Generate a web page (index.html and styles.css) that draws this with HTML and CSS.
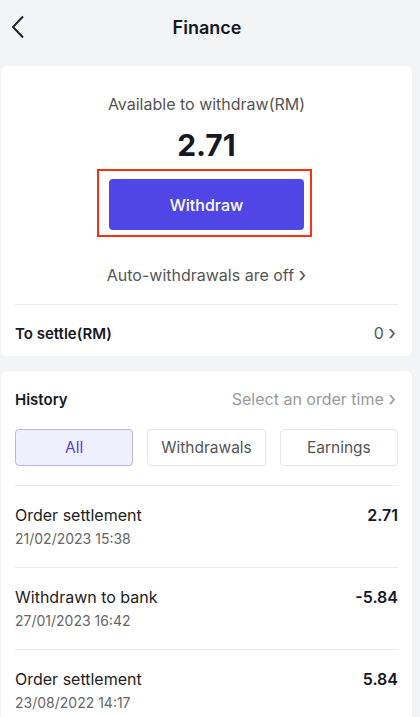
FILE: index.html
```html
<html>
    <head>
        <meta charset="utf-8" />
        <title>Finance</title>
        <link rel="stylesheet" href="styles.css">
    </head>
    <body>
        <div class="header">
            <svg class="back" width="14" height="24" viewBox="0 0 14 24">
                <path d="M12 1.5 L2 12 L12 22.5" fill="none" stroke="#222" stroke-width="2"/>
            </svg>
            <div class="title">Finance</div>
        </div>

        <div class="card balance">
            <div class="label">Available to withdraw(RM)</div>
            <div class="amount">2.71</div>
            <div class="highlight">
                <button class="withdraw">Withdraw</button>
            </div>
            <div class="auto">Auto-withdrawals are off <span class="chev">&#x203A;</span></div>
            <div class="settle">
                <span class="settle-label">To settle(RM)</span>
                <span class="settle-value">0 <span class="chev">&#x203A;</span></span>
            </div>
        </div>

        <div class="card history">
            <div class="history-head">
                <span class="history-title">History</span>
                <span class="history-filter">Select an order time <span class="chev">&#x203A;</span></span>
            </div>
            <div class="tabs">
                <div class="tab active">All</div>
                <div class="tab">Withdrawals</div>
                <div class="tab">Earnings</div>
            </div>
            <div class="row">
                <div>
                    <div class="row-name">Order settlement</div>
                    <div class="row-date">21/02/2023 15:38</div>
                </div>
                <div class="row-amount">2.71</div>
            </div>
            <div class="row">
                <div>
                    <div class="row-name">Withdrawn to bank</div>
                    <div class="row-date">27/01/2023 16:42</div>
                </div>
                <div class="row-amount">-5.84</div>
            </div>
            <div class="row">
                <div>
                    <div class="row-name">Order settlement</div>
                    <div class="row-date">23/08/2022 14:17</div>
                </div>
                <div class="row-amount">5.84</div>
            </div>
        </div>
    </body>
</html>
```

FILE: styles.css
```css
html, body {
    margin: 0;
    padding: 0;
    background: #f3f4f6;
    font-family: "Inter", "Liberation Sans", sans-serif;
    color: #222;
}

body {
    overflow: hidden;
    height: 717px;
}

.header {
    height: 55px;
    display: flex;
    align-items: center;
    justify-content: center;
    position: relative;
    margin-bottom: 11px;
}

.back {
    position: absolute;
    left: 11px;
    top: 15px;
}

.title {
    font-size: 18px;
    font-weight: 600;
    color: #161823;
    margin-right: 6px;
}

.card {
    background: #fff;
    margin: 0 8px 0 1px;
    border-radius: 6px;
}

.balance {
    padding: 26px 14px 0;
    text-align: center;
}

.label {
    font-size: 16px;
    color: #555;
    line-height: 24px;
}

.amount {
    font-size: 30px;
    font-weight: 700;
    color: #161823;
    line-height: 36px;
    margin-top: 11px;
}

.highlight {
    width: 195px;
    margin: 6px 0 0 82px;
    border: 2px solid #fa3010;
    padding: 8px 6px 5px 10px;
}

.withdraw {
    display: block;
    width: 100%;
    height: 51px;
    border: none;
    border-radius: 4px;
    background: #5046e5;
    color: #fff;
    font-family: inherit;
    font-size: 16px;
    font-weight: 500;
}

.auto {
    margin-top: 26px;
    font-size: 16px;
    color: #555;
    line-height: 24px;
}

.chev {
    font-size: 20px;
    line-height: 15px;
    position: relative;
    top: 1px;
}

.settle {
    margin-top: 17px;
    border-top: 1px solid #ebebeb;
    height: 52px;
    padding-top: 5px;
    box-sizing: border-box;
    display: flex;
    justify-content: space-between;
    align-items: center;
    font-size: 15px;
}

.settle-label {
    font-weight: 600;
    color: #161823;
}

.settle-value {
    color: #555;
    font-size: 16px;
    margin-right: 2px;
}

.history {
    margin-top: 15px;
    padding: 0 14px;
}

.history-head {
    height: 56px;
    display: flex;
    justify-content: space-between;
    align-items: center;
    font-size: 15px;
}

.history-title {
    font-weight: 600;
    color: #161823;
}

.history-filter {
    color: #999;
    font-size: 16px;
    margin-right: 2px;
}

.tabs {
    display: grid;
    grid-template-columns: 1fr 1fr 1fr;
    gap: 14px;
    margin-top: 2px;
    padding-bottom: 19px;
    border-bottom: 1px solid #ebebeb;
}

.tab {
    height: 37px;
    box-sizing: border-box;
    border: 1px solid #e6e6e6;
    border-radius: 4px;
    display: flex;
    align-items: center;
    justify-content: center;
    font-size: 15.5px;
    color: #555;
}

.tab.active {
    background: #f0effd;
    border-color: #b9b5f1;
    color: #5046e5;
}

.row {
    height: 82px;
    border-bottom: 1px solid #ebebeb;
    display: flex;
    justify-content: space-between;
    padding-top: 18px;
    box-sizing: border-box;
}

.row-name {
    font-size: 16px;
    color: #222;
    line-height: 22px;
}

.row-date {
    font-size: 14px;
    color: #666;
    line-height: 20px;
    margin-top: 3px;
}

.row-amount {
    font-size: 16px;
    font-weight: 600;
    color: #161823;
    line-height: 22px;
}
```
